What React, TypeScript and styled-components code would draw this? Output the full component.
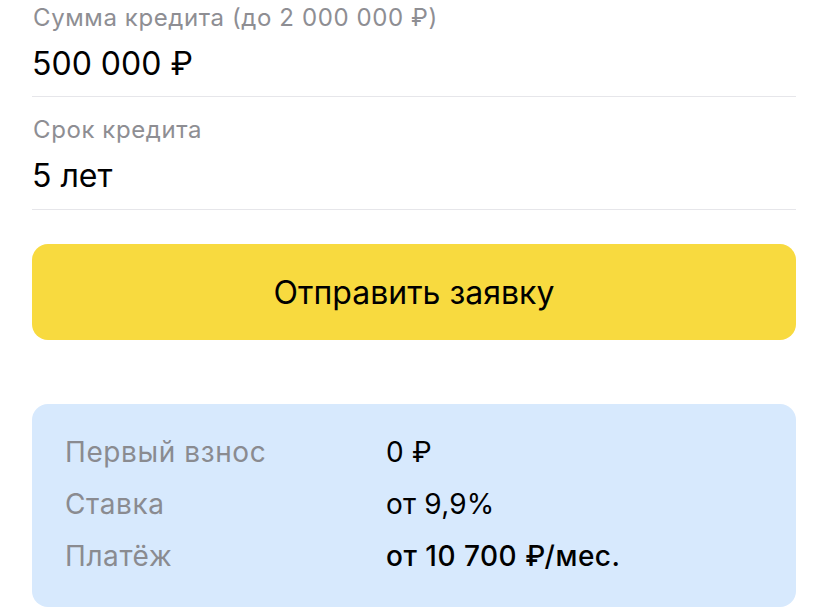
import React from 'react';
import styled, { createGlobalStyle } from 'styled-components';

const GlobalStyle = createGlobalStyle`
  html, body {
    margin: 0;
    padding: 0;
    background: #fff;
  }
  body {
    font-family: Inter, "Noto Sans", Arial, sans-serif;
    -webkit-font-smoothing: antialiased;
  }
`;

const Page = styled.div`
  width: 828px;
  height: 608px;
  overflow: hidden;
  padding: 0 32px;
  box-sizing: border-box;
  display: flex;
  flex-direction: column;
`;

const Field = styled.div`
  display: flex;
  flex-direction: column;
  border-bottom: 1px solid #e6e6ea;
  padding: 17px 0 13px;

  &:first-child {
    padding-top: 2px;
    padding-bottom: 12px;
  }
`;

const Label = styled.div`
  color: #8e8e93;
  font-size: 24px;
  line-height: 32px;
  letter-spacing: 0.6px;
  margin-left: 1px;
`;

const Value = styled.div`
  color: #000;
  font-size: 32px;
  line-height: 40px;
  margin-top: 10px;
`;

const Submit = styled.button`
  margin-top: 34px;
  height: 96px;
  border: none;
  border-radius: 16px;
  background: #f8da3f;
  color: #000;
  font-family: Inter, Arial, sans-serif;
  font-size: 32px;
  padding: 0;
  cursor: pointer;
`;

const Summary = styled.div`
  margin-top: 64px;
  background: #d7e9fd;
  border-radius: 16px;
  padding: 22px 32px 25px 33px;
  display: grid;
  grid-template-columns: 321px 1fr;
  font-size: 28px;
  line-height: 52px;
`;

const Term = styled.div`
  color: #8a8b90;
  letter-spacing: 0.6px;
`;

const Desc = styled.div<{ $bold?: boolean }>`
  color: #000;
  font-weight: ${p => (p.$bold ? 500 : 400)};
  letter-spacing: ${p => (p.$bold ? '0.5px' : '0.2px')};
`;

const rows = [
  { term: 'Первый взнос', desc: '0 ₽' },
  { term: 'Ставка', desc: 'от 9,9%' },
  { term: 'Платёж', desc: 'от 10 700 ₽/мес.', bold: true },
];

export default function App() {
  return (
    <>
      <GlobalStyle />
      <Page>
        <Field>
          <Label>Сумма кредита (до 2 000 000 ₽)</Label>
          <Value>500 000 ₽</Value>
        </Field>
        <Field>
          <Label>Срок кредита</Label>
          <Value>5 лет</Value>
        </Field>
        <Submit>Отправить заявку</Submit>
        <Summary>
          {rows.map(r => (
            <React.Fragment key={r.term}>
              <Term>{r.term}</Term>
              <Desc $bold={r.bold}>{r.desc}</Desc>
            </React.Fragment>
          ))}
        </Summary>
      </Page>
    </>
  );
}
